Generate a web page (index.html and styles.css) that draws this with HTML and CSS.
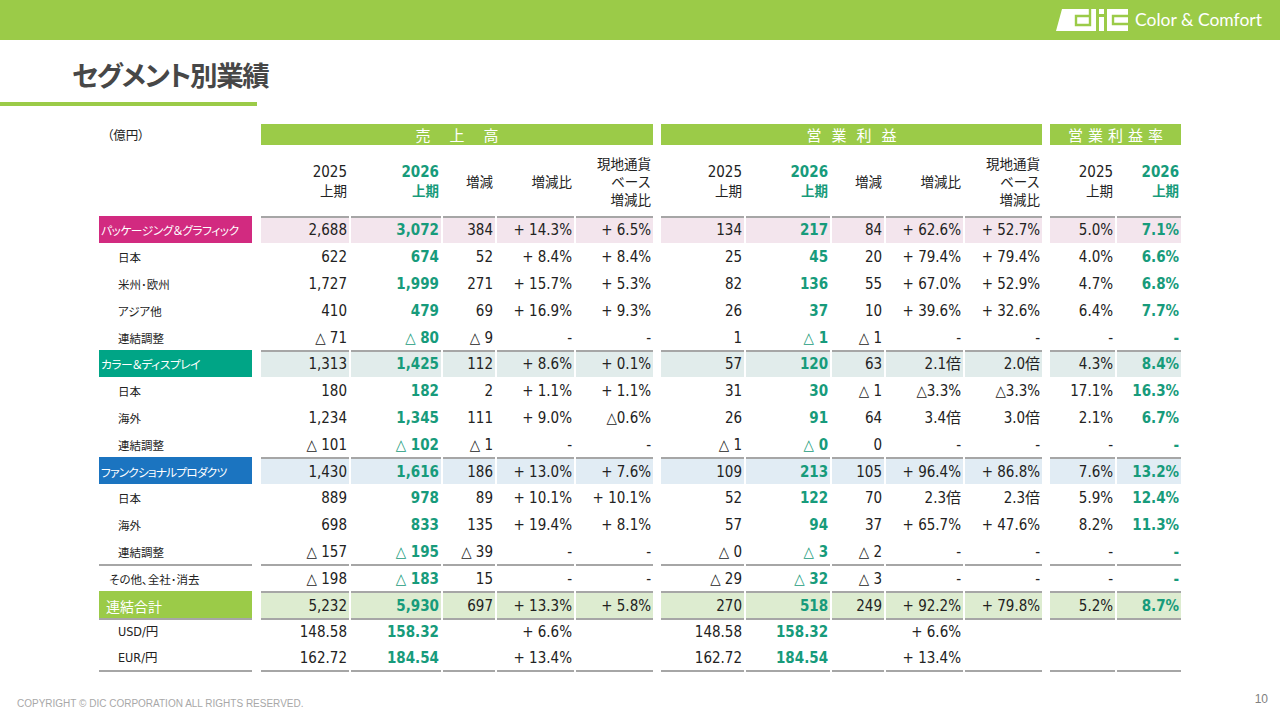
FILE: index.html
```html
<!DOCTYPE html>
<html lang="ja">
<head>
<meta charset="utf-8">
<title>セグメント別業績</title>
<link rel="stylesheet" href="styles.css">
</head>
<body>
<div class="slide">
  <header class="topbar">
    <div class="brand">
      <svg class="logo" viewBox="0 0 72 24" aria-hidden="true">
        <path fill="#fff" d="M6 1 H40 V23 H0 Z"/>
        <path fill="none" stroke="#9bcb48" stroke-width="2.4" d="M34 0 V17 H20 V8 H34"/>
        <rect x="43" y="1" width="5" height="5" fill="#fff"/>
        <rect x="43" y="9" width="5" height="14" fill="#fff"/>
        <rect x="51" y="1" width="21" height="22" fill="#fff"/>
        <path fill="none" stroke="#9bcb48" stroke-width="2.4" d="M73 8 H57 V16 H73"/>
      </svg>
      <span class="tagline">Color &amp; Comfort</span>
    </div>
  </header>

  <h1 class="title">セグメント別業績</h1>
  <div class="rule"></div>

  <table class="seg">
    <colgroup>
      <col class="w153"><col class="w5">
      <col class="w88"><col class="w90"><col class="w52"><col class="w77"><col class="w77">
      <col class="w4">
      <col class="w83"><col class="w84"><col class="w52"><col class="w77"><col class="w77">
      <col class="w4">
      <col class="w65"><col class="w64">
    </colgroup>
    <thead>
      <tr class="grp">
        <th class="unit">（億円）</th><th class="sp"></th>
        <th colspan="5" class="bar bar-sales">売上高</th><th class="sp"></th>
        <th colspan="5" class="bar bar-op">営業利益</th><th class="sp"></th>
        <th colspan="2" class="bar bar-margin">営業利益率</th>
      </tr>
      <tr class="cols">
        <th></th><th class="sp"></th>
        <th><span class="yr">2025</span><br>上期</th>
        <th class="g"><span class="yr">2026</span><br>上期</th>
        <th>増減</th>
        <th>増減比</th>
        <th>現地通貨<br>ベース<br>増減比</th>
        <th class="sp"></th>
        <th><span class="yr">2025</span><br>上期</th>
        <th class="g"><span class="yr">2026</span><br>上期</th>
        <th>増減</th>
        <th>増減比</th>
        <th>現地通貨<br>ベース<br>増減比</th>
        <th class="sp"></th>
        <th><span class="yr">2025</span><br>上期</th>
        <th class="g"><span class="yr">2026</span><br>上期</th>
      </tr>
    </thead>
    <tbody>
      <tr class="line segrow pkg">
        <td class="lab">パッケージング＆グラフィック</td><td class="sp"></td>
        <td>2,688</td><td class="g">3,072</td><td>384</td><td>+ 14.3%</td><td>+ 6.5%</td><td class="sp"></td>
        <td>134</td><td class="g">217</td><td>84</td><td>+ 62.6%</td><td>+ 52.7%</td><td class="sp"></td>
        <td>5.0%</td><td class="g">7.1%</td>
      </tr>
      <tr class="sub">
        <td class="lab">日本</td><td class="sp"></td>
        <td>622</td><td class="g">674</td><td>52</td><td>+ 8.4%</td><td>+ 8.4%</td><td class="sp"></td>
        <td>25</td><td class="g">45</td><td>20</td><td>+ 79.4%</td><td>+ 79.4%</td><td class="sp"></td>
        <td>4.0%</td><td class="g">6.6%</td>
      </tr>
      <tr class="sub">
        <td class="lab">米州･欧州</td><td class="sp"></td>
        <td>1,727</td><td class="g">1,999</td><td>271</td><td>+ 15.7%</td><td>+ 5.3%</td><td class="sp"></td>
        <td>82</td><td class="g">136</td><td>55</td><td>+ 67.0%</td><td>+ 52.9%</td><td class="sp"></td>
        <td>4.7%</td><td class="g">6.8%</td>
      </tr>
      <tr class="sub">
        <td class="lab">アジア他</td><td class="sp"></td>
        <td>410</td><td class="g">479</td><td>69</td><td>+ 16.9%</td><td>+ 9.3%</td><td class="sp"></td>
        <td>26</td><td class="g">37</td><td>10</td><td>+ 39.6%</td><td>+ 32.6%</td><td class="sp"></td>
        <td>6.4%</td><td class="g">7.7%</td>
      </tr>
      <tr class="sub">
        <td class="lab">連結調整</td><td class="sp"></td>
        <td>△ 71</td><td class="g">△ 80</td><td>△ 9</td><td>-</td><td>-</td><td class="sp"></td>
        <td>1</td><td class="g">△ 1</td><td>△ 1</td><td>-</td><td>-</td><td class="sp"></td>
        <td>-</td><td class="g">-</td>
      </tr>

      <tr class="line segrow cd">
        <td class="lab">カラー＆ディスプレイ</td><td class="sp"></td>
        <td>1,313</td><td class="g">1,425</td><td>112</td><td>+ 8.6%</td><td>+ 0.1%</td><td class="sp"></td>
        <td>57</td><td class="g">120</td><td>63</td><td>2.1倍</td><td>2.0倍</td><td class="sp"></td>
        <td>4.3%</td><td class="g">8.4%</td>
      </tr>
      <tr class="sub">
        <td class="lab">日本</td><td class="sp"></td>
        <td>180</td><td class="g">182</td><td>2</td><td>+ 1.1%</td><td>+ 1.1%</td><td class="sp"></td>
        <td>31</td><td class="g">30</td><td>△ 1</td><td>△3.3%</td><td>△3.3%</td><td class="sp"></td>
        <td>17.1%</td><td class="g">16.3%</td>
      </tr>
      <tr class="sub">
        <td class="lab">海外</td><td class="sp"></td>
        <td>1,234</td><td class="g">1,345</td><td>111</td><td>+ 9.0%</td><td>△0.6%</td><td class="sp"></td>
        <td>26</td><td class="g">91</td><td>64</td><td>3.4倍</td><td>3.0倍</td><td class="sp"></td>
        <td>2.1%</td><td class="g">6.7%</td>
      </tr>
      <tr class="sub">
        <td class="lab">連結調整</td><td class="sp"></td>
        <td>△ 101</td><td class="g">△ 102</td><td>△ 1</td><td>-</td><td>-</td><td class="sp"></td>
        <td>△ 1</td><td class="g">△ 0</td><td>0</td><td>-</td><td>-</td><td class="sp"></td>
        <td>-</td><td class="g">-</td>
      </tr>

      <tr class="line segrow fp">
        <td class="lab">ファンクショナルプロダクツ</td><td class="sp"></td>
        <td>1,430</td><td class="g">1,616</td><td>186</td><td>+ 13.0%</td><td>+ 7.6%</td><td class="sp"></td>
        <td>109</td><td class="g">213</td><td>105</td><td>+ 96.4%</td><td>+ 86.8%</td><td class="sp"></td>
        <td>7.6%</td><td class="g">13.2%</td>
      </tr>
      <tr class="sub">
        <td class="lab">日本</td><td class="sp"></td>
        <td>889</td><td class="g">978</td><td>89</td><td>+ 10.1%</td><td>+ 10.1%</td><td class="sp"></td>
        <td>52</td><td class="g">122</td><td>70</td><td>2.3倍</td><td>2.3倍</td><td class="sp"></td>
        <td>5.9%</td><td class="g">12.4%</td>
      </tr>
      <tr class="sub">
        <td class="lab">海外</td><td class="sp"></td>
        <td>698</td><td class="g">833</td><td>135</td><td>+ 19.4%</td><td>+ 8.1%</td><td class="sp"></td>
        <td>57</td><td class="g">94</td><td>37</td><td>+ 65.7%</td><td>+ 47.6%</td><td class="sp"></td>
        <td>8.2%</td><td class="g">11.3%</td>
      </tr>
      <tr class="sub">
        <td class="lab">連結調整</td><td class="sp"></td>
        <td>△ 157</td><td class="g">△ 195</td><td>△ 39</td><td>-</td><td>-</td><td class="sp"></td>
        <td>△ 0</td><td class="g">△ 3</td><td>△ 2</td><td>-</td><td>-</td><td class="sp"></td>
        <td>-</td><td class="g">-</td>
      </tr>

      <tr class="line other">
        <td class="lab">その他、全社･消去</td><td class="sp"></td>
        <td>△ 198</td><td class="g">△ 183</td><td>15</td><td>-</td><td>-</td><td class="sp"></td>
        <td>△ 29</td><td class="g">△ 32</td><td>△ 3</td><td>-</td><td>-</td><td class="sp"></td>
        <td>-</td><td class="g">-</td>
      </tr>
      <tr class="line total">
        <td class="lab">連結合計</td><td class="sp"></td>
        <td>5,232</td><td class="g">5,930</td><td>697</td><td>+ 13.3%</td><td>+ 5.8%</td><td class="sp"></td>
        <td>270</td><td class="g">518</td><td>249</td><td>+ 92.2%</td><td>+ 79.8%</td><td class="sp"></td>
        <td>5.2%</td><td class="g">8.7%</td>
      </tr>
      <tr class="line fx">
        <td class="lab">USD/円</td><td class="sp"></td>
        <td>148.58</td><td class="g">158.32</td><td></td><td>+ 6.6%</td><td></td><td class="sp"></td>
        <td>148.58</td><td class="g">158.32</td><td></td><td>+ 6.6%</td><td></td><td class="sp"></td>
        <td></td><td></td>
      </tr>
      <tr class="fx last">
        <td class="lab">EUR/円</td><td class="sp"></td>
        <td>162.72</td><td class="g">184.54</td><td></td><td>+ 13.4%</td><td></td><td class="sp"></td>
        <td>162.72</td><td class="g">184.54</td><td></td><td>+ 13.4%</td><td></td><td class="sp"></td>
        <td></td><td></td>
      </tr>
    </tbody>
  </table>

  <footer class="foot">
    <span class="copy">COPYRIGHT © DIC CORPORATION ALL RIGHTS RESERVED.</span>
    <span class="page">10</span>
  </footer>
</div>
</body>
</html>
```

FILE: styles.css
```css
* { box-sizing: border-box; }
html, body { margin: 0; padding: 0; }
body {
  width: 1280px;
  height: 720px;
  overflow: hidden;
  background: #fff;
  color: #222;
  font-family: "DejaVu Sans Condensed", "DejaVu Sans", "Noto Sans CJK JP", sans-serif;
}
.slide {
  width: 1280px;
  height: 720px;
  display: flex;
  flex-direction: column;
}

/* top bar */
.topbar {
  height: 40px;
  flex: none;
  background: #9bcb48;
  display: flex;
  justify-content: flex-end;
  align-items: center;
  padding-right: 18px;
}
.brand { display: flex; align-items: center; gap: 7px; }
.logo { width: 72px; height: 24px; display: block; }
.tagline {
  font-family: Lato, "Noto Sans", sans-serif;
  font-size: 17.5px;
  color: #fff;
  line-height: 24px;
}

/* title */
.title {
  margin: 17px 0 0 72px;
  font-family: "Noto Sans CJK JP", sans-serif;
  font-weight: 700;
  font-size: 27.5px;
  line-height: 34px;
  color: #474747;
  font-feature-settings: "palt";
  letter-spacing: -1.4px;
}
.rule {
  width: 257px;
  height: 4px;
  background: #9bcb48;
  margin-top: 11px;
  flex: none;
}

/* table */
.seg {
  margin: 18px 0 0 97px;
  border-collapse: separate;
  border-spacing: 2px 0;
  table-layout: fixed;
  width: 1086px;
}
.w153 { width: 153px; }
.w5 { width: 5px; }
.w4 { width: 4px; }
.w88 { width: 88px; }
.w90 { width: 90px; }
.w52 { width: 52px; }
.w77 { width: 77px; }
.w83 { width: 83px; }
.w84 { width: 84px; }
.w65 { width: 65px; }
.w64 { width: 64px; }

.seg th { padding: 0; font-weight: 400; }
.grp th { height: 21px; line-height: 21px; }
.unit {
  text-align: left;
  padding-left: 8px !important;
  font-family: "Noto Sans CJK JP", sans-serif;
  font-size: 12.5px;
  font-feature-settings: "palt";
  color: #222;
}
.bar {
  background: #9bcb48;
  color: #fff;
  font-family: "Noto Sans CJK JP", sans-serif;
  font-size: 15px;
  text-align: center;
}
.bar-sales { letter-spacing: 19px; text-indent: 19px; }
.bar-op { letter-spacing: 10px; text-indent: 10px; }
.bar-margin { letter-spacing: 5px; text-indent: 5px; }

.cols th {
  height: 71px;
  text-align: right;
  vertical-align: middle;
  padding-right: 2px;
  font-family: "Noto Sans CJK JP", sans-serif;
  font-size: 13.5px;
  line-height: 18px;
  color: #222;
}
.cols .yr {
  font-family: "DejaVu Sans Condensed", "DejaVu Sans", sans-serif;
  font-size: 15px;
}
.cols th.g { color: #179b7b; font-weight: 700; }

.seg tbody tr { height: 26.8px; }
.seg tbody td {
  padding: 0 2px 0 0;
  border-top: 2px solid transparent;
  text-align: right;
  vertical-align: middle;
  font-size: 15px;
  line-height: 20px;
  white-space: nowrap;
  color: #222;
}
.seg tbody td.g { color: #179b7b; font-weight: 700; }
.seg td.sp, .seg th.sp { background: none; border-color: transparent; }

.line td:not(.sp) { border-top-color: #a6a6a6; }
.last td:not(.sp) { border-bottom: 2px solid #a6a6a6; }

.lab {
  text-align: left !important;
  font-family: "Noto Sans CJK JP", sans-serif;
  font-feature-settings: "palt";
  overflow: hidden;
}
.segrow .lab {
  color: #fff !important;
  font-size: 11.8px;
  padding-left: 2px;
  letter-spacing: -0.5px;
}
.fp .lab { letter-spacing: -0.9px; }
.sub .lab { font-size: 11.5px; padding-left: 19px; }
.other .lab { font-size: 11.5px; padding-left: 10px; }
.fx .lab { padding-left: 19px; font-family: "DejaVu Sans Condensed", "Noto Sans CJK JP", sans-serif; font-size: 12.5px; }
.total .lab {
  color: #fff !important;
  font-size: 14px;
  padding-left: 7px;
  background: #9bcb48;
  border-top-color: #9bcb48 !important;
}

.pkg .lab { background: #d22a80; border-top-color: #d22a80 !important; }
.pkg td:not(.sp):not(.lab) { background: #f3e5ed; }
.cd .lab { background: #00a586; border-top-color: #00a586 !important; }
.cd td:not(.sp):not(.lab) { background: #e1eceb; }
.fp .lab { background: #1b74c0; border-top-color: #1b74c0 !important; }
.fp td:not(.sp):not(.lab) { background: #e1ecf4; }
.total td:not(.sp):not(.lab) { background: #ddecd0; }

/* footer */
.foot {
  margin-top: auto;
  height: 28px;
  flex: none;
  display: flex;
  justify-content: space-between;
  align-items: center;
  padding: 0 12px 6px 17px;
  font-family: "Liberation Sans", Arial, sans-serif;
}
.copy { font-size: 10px; color: #a8a8a8; }
.page { font-size: 12px; color: #808080; margin-bottom: 8px; }
```
